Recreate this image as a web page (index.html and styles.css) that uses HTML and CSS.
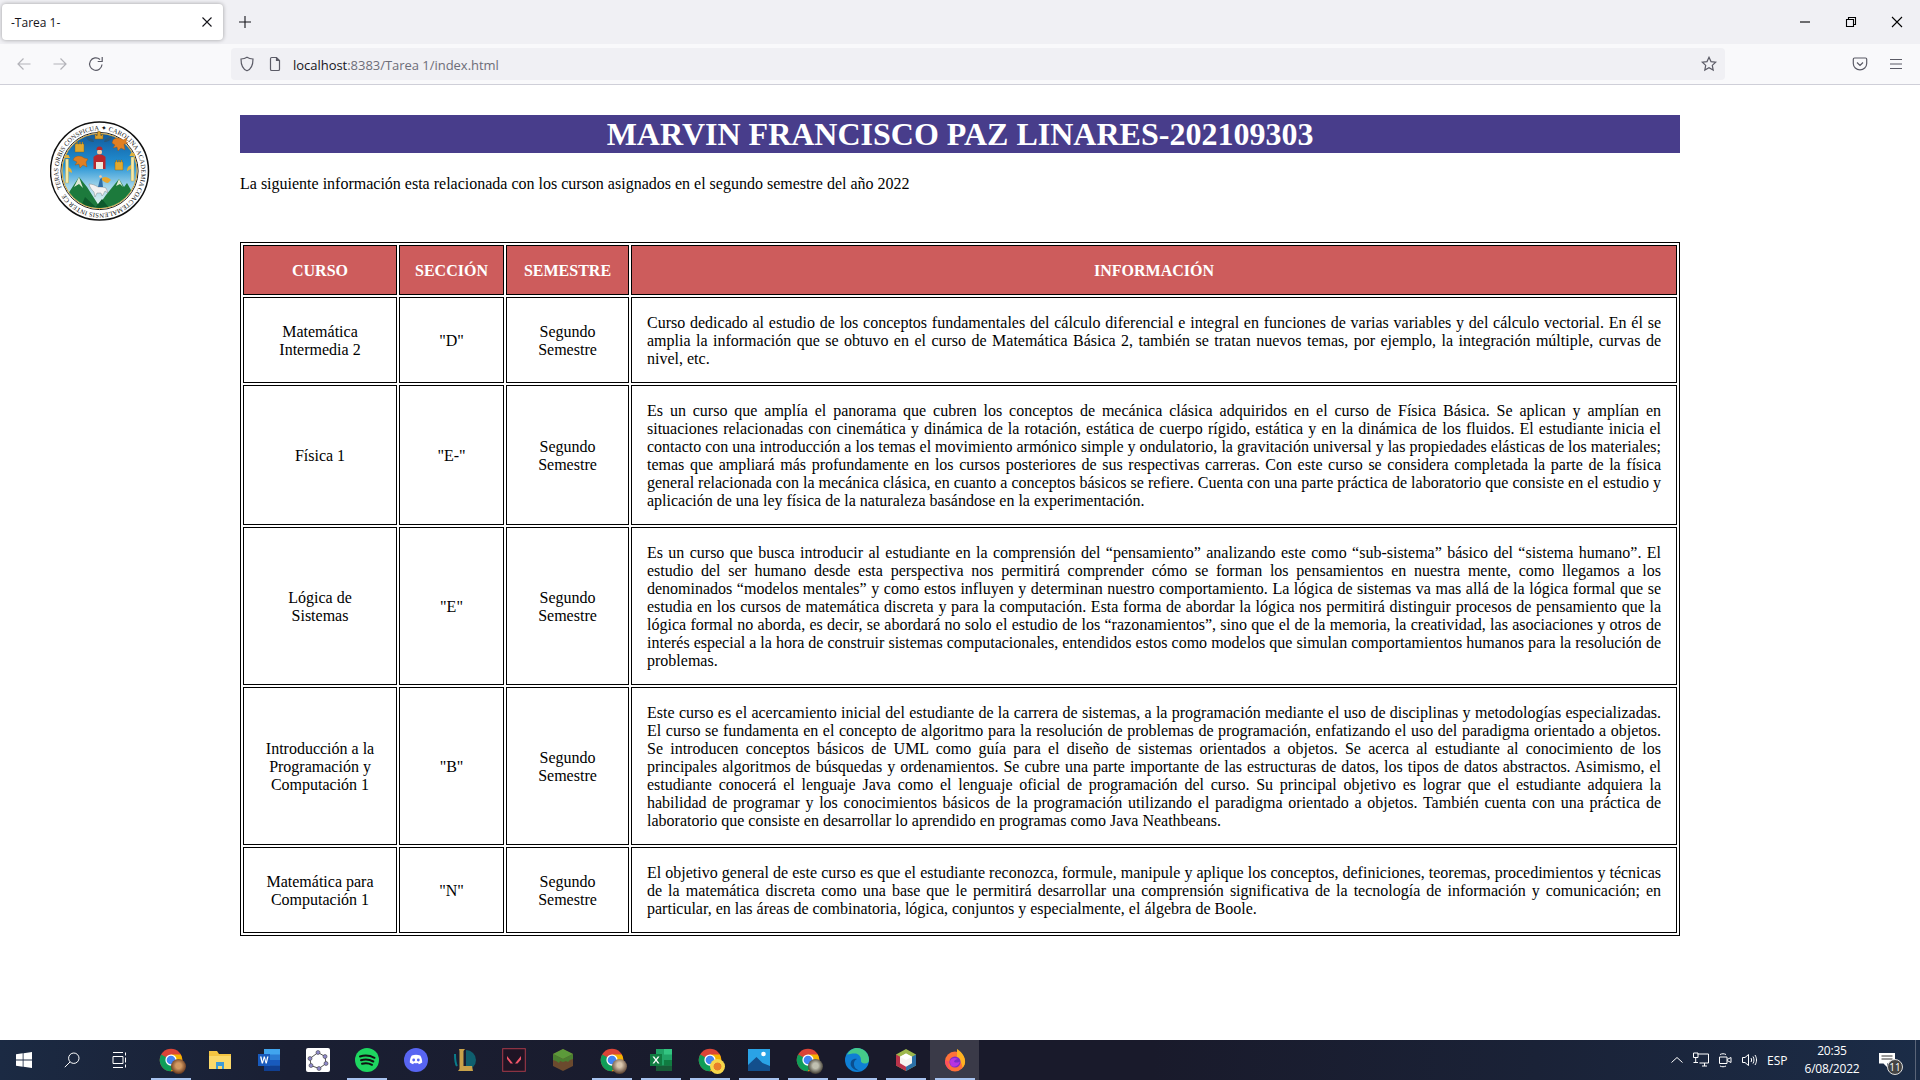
FILE: index.html
```html
<!DOCTYPE html>
<html lang="es">
<head>
<meta charset="utf-8">
<title>-Tarea 1-</title>
<link rel="stylesheet" href="styles.css">
</head>
<body>
<svg class="defs" aria-hidden="true">
  <defs>
    <symbol id="chrome" viewBox="0 0 32 32">
      <circle cx="16" cy="16" r="15" fill="#db4437"/>
      <path d="M16 16 3 8.500A15 15 0 0 0 16 31l7.500-13z" fill="#0f9d58"/>
      <path d="M16 16l7.500 2L16 31A15 15 0 0 0 29 8.500H16z" fill="#f4b400"/>
      <circle cx="16" cy="16" r="7.500" fill="#fff"/>
      <circle cx="16" cy="16" r="5.800" fill="#4285f4"/>
    </symbol>
  </defs>
</svg>
<div class="screen">
  <header class="browser">
    <div class="tabbar">
      <div class="tab">
        <span class="tab-title">-Tarea 1-</span>
        <svg class="ico12" viewBox="0 0 12 12"><path d="M1.500 1.500l9 9M10.500 1.500l-9 9" class="st-dark"/></svg>
      </div>
      <svg class="newtab" viewBox="0 0 14 14"><path d="M7 1v12M1 7h12" class="st-dark"/></svg>
      <div class="winctl">
        <span class="winbtn"><svg class="ico12" viewBox="0 0 12 12"><path d="M1 6h10" class="st-black"/></svg></span>
        <span class="winbtn"><svg class="ico12" viewBox="0 0 12 12"><path d="M1.500 3.500h7v7h-7zM3.500 3.500v-2h7v7h-2" class="st-black"/></svg></span>
        <span class="winbtn"><svg class="ico12" viewBox="0 0 12 12"><path d="M1 1l10 10M11 1L1 11" class="st-black"/></svg></span>
      </div>
    </div>
    <div class="toolbar">
      <nav class="navbtns">
        <svg class="ico16" viewBox="0 0 16 16"><path d="M14.500 8H2M7.500 2.500 2 8l5.500 5.500" class="st-faint"/></svg>
        <svg class="ico16" viewBox="0 0 16 16"><path d="M1.500 8H14M8.500 2.500 14 8l-5.500 5.500" class="st-faint"/></svg>
        <svg class="ico16" viewBox="0 0 16 16"><path d="M14 8.500A6.200 6.200 0 1 1 12 3.500M14.200 1v4.500H9.700" class="st-gray"/></svg>
      </nav>
      <div class="urlbar">
        <svg class="ico16" viewBox="0 0 16 16"><path d="M8 1.200c1.800 1.200 3.600 1.700 6 1.800 0 6.500-2 10.300-6 11.800C4 13.300 2 9.500 2 3c2.400-.1 4.200-.6 6-1.800z" class="st-gray"/></svg>
        <svg class="ico16 pageico" viewBox="0 0 16 16"><path d="M3.500 2.800c0-.7.500-1.300 1.200-1.300h4.800l3 3v8.700c0 .7-.5 1.300-1.200 1.300H4.700c-.7 0-1.200-.6-1.200-1.300zM9.500 1.500v3h3" class="st-gray"/></svg>
        <span class="url"><span class="url-host">localhost</span>:8383/Tarea 1/index.html</span>
        <svg class="ico16 star" viewBox="0 0 16 16"><path d="M8 1.300l2 4.300 4.700.6-3.400 3.200.9 4.700L8 11.800l-4.200 2.300.9-4.700L1.300 6.200 6 5.600z" class="st-gray"/></svg>
      </div>
      <div class="toolicons">
        <svg class="ico16" viewBox="0 0 16 16"><path d="M2.500 2h11c.7 0 1.200.5 1.200 1.200v4.300c0 3.600-3 6.300-6.700 6.300S1.300 11.100 1.300 7.500V3.200C1.300 2.500 1.800 2 2.500 2zM5 6.500l3 3 3-3" class="st-gray"/></svg>
        <svg class="ico16" viewBox="0 0 16 16"><path d="M2 3.500h12M2 8h12M2 12.500h12" class="st-gray"/></svg>
      </div>
    </div>
  </header>

  <main class="page">
    <aside class="brand">
      <svg class="seal" viewBox="0 0 100 100" role="img" aria-label="Escudo USAC">
        <defs>
          <linearGradient id="sky" x1="0" y1="0" x2="0" y2="1">
            <stop offset="0" stop-color="#125a9c"/>
            <stop offset=".42" stop-color="#2291d4"/>
            <stop offset=".7" stop-color="#9fd4ea"/>
            <stop offset="1" stop-color="#eef7ee"/>
          </linearGradient>
          <clipPath id="disc"><circle cx="49.500" cy="50" r="37"/></clipPath>
          <path id="ring" d="M11.900 67.500A41.500 41.500 0 1 1 12.500 68.800"/>
        </defs>
        <circle cx="49.500" cy="50" r="49" fill="#fff" stroke="#111" stroke-width="1.500"/>
        <text class="seal-text"><textPath href="#ring" textLength="254">TERAS ORBIS CONSPICUA ✦ CAROLINA ACADEMIA COACTEMALENSIS INTER CE</textPath></text>
        <circle cx="49.500" cy="50" r="38.600" fill="none" stroke="#222" stroke-width="1"/>
        <circle cx="49.500" cy="50" r="37.500" fill="url(#sky)" stroke="#d9a83a" stroke-width="1"/>
        <g clip-path="url(#disc)">
          <path d="M8 88 29 56l8 10 14 22zM46 88l10-14 13-16 5 8 3-4 16 28z" fill="#1c7a3c"/>
          <path d="M29 56l-5 10 5-3 4 4zM69 58l-3 7 4-2 3 3z" fill="#dfe9d6"/>
          <path d="M30 88l5-12 13 12zM44 88l8-10 8 10z" fill="#0d5a2c"/>
        </g>
        <path d="M43 18c-3 0-5-3-7-2 1 3 4 5 8 5zM55 18c3 0 5-3 7-2-1 3-4 5-8 5z" fill="#2a5a7c"/>
        <path d="M45 18v-5l2 2 1-5 1 1 1-1 1 5 2-2v5z" fill="#d9a02e" stroke="#8a5e12" stroke-width=".5"/>
        <path d="M25 31v-8h1.500v-2h1v2h2v-2h1v2h1.500v-2h1v2H34v8z" fill="#e0a92f" stroke="#7d5a16" stroke-width=".4"/>
        <path d="M63 19c3-3 8-2 10 0l4-2-1 4 2 1-4 1 1 6-4-2-3 3-1-4-4 1 2-3-3-2z" fill="#e07f22" stroke="#9a5010" stroke-width=".4"/>
        <path d="M24 37c3-3 8-2 10 0l4 1-2 3 1 5-4-2-3 3-1-4-4 1 2-3-4-2z" fill="#e07f22" stroke="#9a5010" stroke-width=".4"/>
        <path d="M65 49v-8h1v-2h1v2h1.500v-2h1v2H71v-2h1v2h1v8z" fill="#e0a92f" stroke="#7d5a16" stroke-width=".4"/>
        <circle cx="49.500" cy="31" r="2.500" fill="#f3c9a3"/>
        <path d="M49.500 25.500c-2.200 0-3.200 1.800-3 3.500h6c.2-1.700-.8-3.500-3-3.500z" fill="#b6252a"/>
        <path d="M43.500 48V36c2-2 4-2.500 6-2.500s4 .5 6 2.500v12z" fill="#b8262d"/>
        <path d="M46 48v-7h7v7z" fill="#f0e9dc"/>
        <path d="M15.500 38h3v24h-3zM81 36h3v24h-3z" fill="#f4e9a8" stroke="#b49a3a" stroke-width=".4"/>
        <path d="M14 37h6l-1.500-3h-3zM79.500 35h6L84 32h-3zM18 46c3 1 4 3 4 6l-4-2zM81 44c-3 1-4 3-4 6l4-2z" fill="#e1b23d"/>
        <path d="M39 63c3 0 6 1 9 3 3 0 6 0 8 1l2 5-3-2c-1 2-2 4-3 5l-1-3-4 0-2 4-1-5c-2-2-4-4-5-8z" fill="#f2f2f2" stroke="#777" stroke-width=".4"/>
        <path d="M48 66l2-8 2-1 1 9z" fill="#2d6ea8"/>
        <path d="M52 57c3-2 6-1 9 2l-3 3c-2 0-4-1-6-3z" fill="#e8a72e"/>
        <circle cx="50.500" cy="55.500" r="1.300" fill="#f3c9a3"/>
      </svg>
    </aside>
    <section class="content">
      <h1 class="title">MARVIN FRANCISCO PAZ LINARES-202109303</h1>
      <p class="intro">La siguiente información esta relacionada con los curson asignados en el segundo semestre del año 2022</p>
      <table class="courses">
        <colgroup>
          <col class="col-a"><col class="col-b"><col class="col-c"><col>
        </colgroup>
        <thead>
          <tr><th>CURSO</th><th>SECCIÓN</th><th>SEMESTRE</th><th>INFORMACIÓN</th></tr>
        </thead>
        <tbody>
          <tr>
            <td>Matemática Intermedia 2</td><td>"D"</td><td>Segundo Semestre</td>
            <td class="info">Curso dedicado al estudio de los conceptos fundamentales del cálculo diferencial e integral en funciones de varias variables y del cálculo vectorial. En él se amplia la información que se obtuvo en el curso de Matemática Básica 2, también se tratan nuevos temas, por ejemplo, la integración múltiple, curvas de nivel, etc.</td>
          </tr>
          <tr>
            <td>Física 1</td><td>"E-"</td><td>Segundo Semestre</td>
            <td class="info">Es un curso que amplía el panorama que cubren los conceptos de mecánica clásica adquiridos en el curso de Física Básica. Se aplican y amplían en situaciones relacionadas con cinemática y dinámica de la rotación, estática de cuerpo rígido, estática y en la dinámica de los fluidos. El estudiante inicia el contacto con una introducción a los temas el movimiento armónico simple y ondulatorio, la gravitación universal y las propiedades elásticas de los materiales; temas que ampliará más profundamente en los cursos posteriores de sus respectivas carreras. Con este curso se considera completada la parte de la física general relacionada con la mecánica clásica, en cuanto a conceptos básicos se refiere. Cuenta con una parte práctica de laboratorio que consiste en el estudio y aplicación de una ley física de la naturaleza basándose en la experimentación.</td>
          </tr>
          <tr>
            <td>Lógica de Sistemas</td><td>"E"</td><td>Segundo Semestre</td>
            <td class="info">Es un curso que busca introducir al estudiante en la comprensión del “pensamiento” analizando este como “sub-sistema” básico del “sistema humano”. El estudio del ser humano desde esta perspectiva nos permitirá comprender cómo se forman los pensamientos en nuestra mente, como llegamos a los denominados “modelos mentales” y como estos influyen y determinan nuestro comportamiento. La lógica de sistemas va mas allá de la lógica formal que se estudia en los cursos de matemática discreta y para la computación. Esta forma de abordar la lógica nos permitirá distinguir procesos de pensamiento que la lógica formal no aborda, es decir, se abordará no solo el estudio de los “razonamientos”, sino que el de la memoria, la creatividad, las asociaciones y otros de interés especial a la hora de construir sistemas computacionales, entendidos estos como modelos que simulan comportamientos humanos para la resolución de problemas.</td>
          </tr>
          <tr>
            <td>Introducción a la Programación y Computación 1</td><td>"B"</td><td>Segundo Semestre</td>
            <td class="info">Este curso es el acercamiento inicial del estudiante de la carrera de sistemas, a la programación mediante el uso de disciplinas y metodologías especializadas. El curso se fundamenta en el concepto de algoritmo para la resolución de problemas de programación, enfatizando el uso del paradigma orientado a objetos. Se introducen conceptos básicos de UML como guía para el diseño de sistemas orientados a objetos. Se acerca al estudiante al conocimiento de los principales algoritmos de búsquedas y ordenamientos. Se cubre una parte importante de las estructuras de datos, los tipos de datos abstractos. Asimismo, el estudiante conocerá el lenguaje Java como el lenguaje oficial de programación del curso. Su principal objetivo es lograr que el estudiante adquiera la habilidad de programar y los conocimientos básicos de la programación utilizando el paradigma orientado a objetos. También cuenta con una práctica de laboratorio que consiste en desarrollar lo aprendido en programas como Java Neathbeans.</td>
          </tr>
          <tr>
            <td>Matemática para Computación 1</td><td>"N"</td><td>Segundo Semestre</td>
            <td class="info">El objetivo general de este curso es que el estudiante reconozca, formule, manipule y aplique los conceptos, definiciones, teoremas, procedimientos y técnicas de la matemática discreta como una base que le permitirá desarrollar una comprensión significativa de la tecnología de información y comunicación; en particular, en las áreas de combinatoria, lógica, conjuntos y especialmente, el álgebra de Boole.</td>
          </tr>
        </tbody>
      </table>
    </section>
  </main>

  <footer class="taskbar">
    <div class="sysbtns">
      <span class="sysbtn"><svg class="ico16" viewBox="0 0 16 16"><path d="M0 2.300 6.700 1.300v6.300H0zM7.500 1.200 16 0v7.600H7.500zM0 8.400h6.700v6.300L0 13.700zM7.500 8.400H16V16l-8.500-1.200z" fill="#fff"/></svg></span>
      <span class="sysbtn"><svg class="ico16" viewBox="0 0 16 16"><circle cx="9.800" cy="6.200" r="5.200" class="st-white"/><path d="M6 10 .8 15.200" class="st-white"/></svg></span>
      <span class="sysbtn"><svg class="ico16" viewBox="0 0 16 16"><path d="M1 .5h10M1 15.500h10M1 4.500h10v7H1zM13.500 .5v3M13.500 5.500v5M13.500 12.500v3" class="st-white"/></svg></span>
    </div>
    <div class="apps">
      <span class="app on"><svg class="appico" viewBox="0 0 32 32"><use href="#chrome"/></svg><span class="avatar av-brown"></span></span>
      <span class="app"><svg class="appico" viewBox="0 0 24 24"><path d="M1 3h8l2 3h12v15H1z" fill="#f4c542"/><path d="M1 8h22v13H1z" fill="#fbd96a"/><path d="M8 14h8v7h-2v-3h-4v3H8z" fill="#3e9bd6"/></svg></span>
      <span class="app"><svg class="appico" viewBox="0 0 24 24"><path d="M7 1h16v22H7z" fill="#2b7cd3"/><path d="M7 1h16v5.500H7z" fill="#41a5ee"/><path d="M7 12h16v5.500H7z" fill="#185abd"/><path d="M7 17.500h16V23H7z" fill="#103f91"/><path d="M1 6h12v12H1z" fill="#185abd"/><path d="M3 8.500h1.500l1 5 1.200-5h1.200l1.200 5 1-5h1.400l-1.700 7H8.600L7.300 10.500 6 15.500H4.700z" fill="#fff"/></svg></span>
      <span class="app"><svg class="appico" viewBox="0 0 24 24"><rect width="24" height="24" rx="2" fill="#fff"/><path d="M12 4.500l7 4 1 7-7 5-8-3-1-7z" fill="none" stroke="#555" stroke-width="1"/><g fill="#8d88c9" stroke="#444" stroke-width=".6"><circle cx="12" cy="4.500" r="2"/><circle cx="19" cy="8.500" r="2"/><circle cx="20" cy="15.500" r="2"/><circle cx="13" cy="20.500" r="2"/><circle cx="5" cy="17.500" r="2"/><circle cx="4" cy="10.500" r="2"/></g></svg></span>
      <span class="app on"><svg class="appico" viewBox="0 0 24 24"><circle cx="12" cy="12" r="12" fill="#1ed760"/><path d="M5 8.500c5-1.500 10-1 14.500 1.300M6 12.300c4.300-1.200 8.500-.8 12.300 1.200M7 15.800c3.500-.9 7-.6 10 1" fill="none" stroke="#111" stroke-width="2" stroke-linecap="round"/></svg></span>
      <span class="app"><svg class="appico" viewBox="0 0 24 24"><circle cx="12" cy="12" r="12" fill="#5865f2"/><path d="M7.800 7.500c2.700-.9 5.700-.9 8.400 0 1.300 2 2 4.300 2 7-1 .9-2.200 1.500-3.300 1.800l-.9-1.400c-1.300.4-2.700.4-4 0l-.9 1.400c-1.100-.3-2.300-.9-3.300-1.800 0-2.700.7-5 2-7z" fill="#fff"/><circle cx="9.700" cy="12" r="1.400" fill="#5865f2"/><circle cx="14.300" cy="12" r="1.400" fill="#5865f2"/></svg></span>
      <span class="app"><svg class="appico" viewBox="0 0 24 24"><path d="M13 2a10 10 0 0 1 0 20z" fill="#0f5f6e"/><path d="M2 6c0 4 0 9 2 12" stroke="#0a7d8a" stroke-width="2" fill="none"/><path d="M6 1h6l-1.500 2v15H19l1 5H5l1.500-2V3z" fill="#c8a24a"/></svg></span>
      <span class="app"><svg class="appico" viewBox="0 0 24 24"><rect x=".7" y=".7" width="22.600" height="22.600" fill="#1e1424" stroke="#a83a4a" stroke-width="1"/><path d="M5 8l6 7.500H8.500L5 11zM19 8v3.500l-3.500 4H13z" fill="#f4566a"/></svg></span>
      <span class="app"><svg class="appico" viewBox="0 0 24 24"><path d="M12 1l10 5v12l-10 5-10-5V6z" fill="#6b4a2e"/><path d="M12 1l10 5-10 5L2 6z" fill="#5c9a3a"/><path d="M2 6l10 5v3l-3-1-1 2-3-2-3-1zM22 6l-10 5v3l3-1 2 1 2-2 3-1z" fill="#4a7f30"/></svg></span>
      <span class="app on"><svg class="appico" viewBox="0 0 32 32"><use href="#chrome"/></svg><span class="avatar av-dog"></span></span>
      <span class="app on"><svg class="appico" viewBox="0 0 24 24"><path d="M7 1h16v22H7z" fill="#21a366"/><path d="M15 1h8v5.500h-8z" fill="#33c481"/><path d="M15 12h8v5.500h-8z" fill="#107c41"/><path d="M7 17.500h16V23H7z" fill="#185c37"/><path d="M1 6h12v12H1z" fill="#107c41"/><path d="M3.500 8.500H5.200L7 11l1.800-2.500h1.700L7.900 12l2.600 3.500H8.800L7 13l-1.800 2.500H3.500L6.100 12z" fill="#fff"/></svg></span>
      <span class="app on"><svg class="appico" viewBox="0 0 32 32"><use href="#chrome"/></svg><span class="avatar av-corgi"></span></span>
      <span class="app on"><svg class="appico" viewBox="0 0 24 24"><path d="M1 1h22v22H1z" fill="#2aa3e6"/><path d="M1 23v-6L9.500 9l6 6 7.500 3v5z" fill="#134f8c"/><circle cx="16.500" cy="6" r="2.300" fill="#fff"/></svg></span>
      <span class="app on"><svg class="appico" viewBox="0 0 32 32"><use href="#chrome"/></svg><span class="avatar av-gray"></span></span>
      <span class="app on"><svg class="appico" viewBox="0 0 24 24"><circle cx="12" cy="12" r="12" fill="#0f7fd4"/><path d="M2 7C4 2.500 8 0 12 0c7 0 12 5 12 12 0 2-1.500 3.500-4 3.500-3 0-4.500-1.500-4-3.500C16 8 13 5.500 10 5.500 6.500 5.500 3.500 6 2 7z" fill="#45c98a"/><path d="M9 11c-3 1-4 4-3 7 1.500 3 5 5 9 4.500-4-.5-6.500-4-6-7.500.2-1.500 1-3 3-4-1-.5-2-.5-3 0z" fill="#0b4f8f"/></svg></span>
      <span class="app on"><svg class="appico" viewBox="0 0 24 24"><path d="M12 1l10 5.500v11L12 23 2 17.500v-11z" fill="#9db84c"/><path d="M2 6.500 12 12v11L2 17.500z" fill="#b8324a"/><path d="M22 6.500 12 12v11l10-5.500z" fill="#2b70a8"/><path d="M12 5.500l6 3.300v6.500L12 18.800l-6-3.500V8.800z" fill="#f4f4f0"/><path d="M12 12 6 8.800l6-3.300 6 3.300z" fill="#fff"/></svg></span>
      <span class="app on active"><svg class="appico" viewBox="0 0 24 24"><circle cx="12" cy="13.500" r="10" fill="#ff7139"/><path d="M14 1c3 2 7 5 8 11 .5 3-.5 6-2.500 8-.3-5-3-8-5.500-9.500z" fill="#ffb321"/><path d="M2 12c-.3 5 2.500 9 7 10.500-3-2-4.500-5-3-9z" fill="#ff4f5e"/><circle cx="12" cy="14" r="5.600" fill="#7c2bc8"/><path d="M7 13c1-3 5-4 8-2-3 .5-4 1.500-3.800 3 2 1 4.500.5 5.600-.5-.5 3-3 5.200-5.800 5.200S7 16.500 7 13z" fill="#b833e1"/></svg></span>
    </div>
    <div class="tray">
      <svg class="ico16 trayico1" viewBox="0 0 16 16"><path d="M2.500 10.500 8 5.500l5.500 5" class="st-white"/></svg>
      <svg class="ico16" viewBox="0 0 16 16"><path d="M4.500 2H15.500v9h-9M9 14h5M11.500 11v3M.5 1h4.500v4.500H.5zM2.700 5.500v5h-1.200M.5 10.500h4.500" class="st-white"/></svg>
      <svg class="ico16" viewBox="0 0 16 16"><path d="M2.500 5h7.500v6.500H2.500zM10 7.500 14 5.500v5l-4-2M3 2.500c2-1 4-1 6 0M3 14c2 1 4 1 6 0" class="st-white"/></svg>
      <svg class="ico16" viewBox="0 0 16 16"><path d="M1.500 5.500h2.500L7.500 2.500v11L4 10.500H1.500zM10 6c.8 1.300.8 2.700 0 4M12 4.500c1.300 2.300 1.300 4.700 0 7M14 3c2 3.300 2 6.700 0 10" class="st-white"/></svg>
      <span class="lang">ESP</span>
      <span class="clock"><span>20:35</span><span>6/08/2022</span></span>
      <span class="notif">
        <svg class="ico16 notifico" viewBox="0 0 16 16"><path d="M0 1h16v10.500H8v3.500l-3.500-3.500H0z" fill="#fff"/><path d="M2.500 4h11M2.500 7h11" stroke="#333" stroke-width="1"/></svg>
        <span class="badge">11</span>
      </span>
      <span class="desktop"></span>
    </div>
  </footer>
</div>
</body>
</html>
```
FILE: styles.css
```css
* { box-sizing: border-box; }
html, body { margin: 0; padding: 0; height: 100%; }
body { background: #fff; overflow: hidden; font-family: "Liberation Serif", serif; color: #000; }
.defs { display: none; }
.screen { display: flex; flex-direction: column; height: 1080px; }

/* icon sizes and strokes */
.ico12 { width: 12px; height: 12px; flex: none; display: block; }
.ico16 { width: 16px; height: 16px; flex: none; display: block; }
.st-dark, .st-black, .st-faint, .st-gray, .st-white { fill: none; stroke-width: 1.1; }
.st-dark { stroke: #15141a; }
.st-black { stroke: #000; }
.st-faint { stroke: #b3b3b9; stroke-width: 1.2; }
.st-gray { stroke: #5b5b66; stroke-width: 1.2; }
.st-white { stroke: #fff; stroke-width: 1; }

/* browser chrome */
.browser { flex: none; font-family: "Open Sans", sans-serif; }
.tabbar { display: flex; align-items: center; height: 44px; padding: 4px 0 4px 2px; background: #f0f0f4; }
.tab { display: flex; align-items: center; justify-content: space-between; width: 221px; height: 36px; padding: 0 10px 0 9px; background: #fff; border-radius: 4px; box-shadow: 0 0 4px rgba(0,0,0,.35); }
.tab-title { font-size: 12px; color: #15141a; }
.newtab { width: 14px; height: 14px; margin-left: 15px; display: block; }
.winctl { display: flex; margin-left: auto; }
.winbtn { display: flex; align-items: center; justify-content: center; width: 46px; height: 36px; }
.toolbar { display: flex; align-items: center; height: 41px; padding-bottom: 1px; background: #f9f9fb; border-bottom: 1px solid #cfcfd8; }
.navbtns { display: flex; gap: 20px; width: 231px; padding-left: 16px; }
.urlbar { display: flex; align-items: center; width: 1494px; height: 32px; padding: 0 8px; background: #f0f0f4; border-radius: 4px; }
.pageico { margin-left: 12px; }
.url { margin-left: 10px; padding-top: 2px; font-size: 13px; letter-spacing: -.03px; color: #6d6d78; }
.url-host { color: #15141a; }
.star { margin-left: auto; }
.toolicons { display: flex; gap: 20px; margin-left: 127px; }

/* page */
.page { flex: 1; display: grid; grid-template-columns: 240px 1440px; align-content: start; padding-top: 30px; }
.brand { padding: 6px 0 0 50px; }
.seal { display: block; width: 100px; height: 100px; }
.seal-text { font-family: "Liberation Serif", serif; font-size: 6.500px; fill: #111; }
.title { margin: 0; height: 38px; line-height: 38px; background: #483d8b; color: #fff; font-size: 32px; font-weight: 700; text-align: center; }
.intro { margin: 22px 0 49px; font-size: 16px; line-height: 18px; }

.courses { width: 1440px; table-layout: fixed; border: 1px solid #000; border-spacing: 2px; border-collapse: separate; font-size: 16px; line-height: 18px; }
.col-a { width: 154px; }
.col-b { width: 105px; }
.col-c { width: 123px; }
.courses th, .courses td { padding: 16px 15px 14px; border: 1px solid #000; text-align: center; vertical-align: middle; }
.courses th { background: #cd5c5c; color: #fff; font-weight: 700; }
.courses td.info { text-align: justify; }

/* taskbar */
.taskbar { flex: none; display: flex; height: 40px; background: linear-gradient(90deg, #1b2a43 0%, #1a1f33 15%, #191a2b 40%, #191a2b 60%, #1a2237 80%, #1b2c47 100%); }
.sysbtns { display: flex; width: 146px; }
.sysbtn { display: flex; align-items: center; justify-content: center; width: 48px; }
.apps { display: flex; }
.app { position: relative; display: flex; align-items: center; justify-content: center; width: 49px; height: 40px; }
.appico { width: 24px; height: 24px; display: block; }
.app.on::after { content: ""; position: absolute; left: 4.500px; right: 4.500px; bottom: 0; height: 2px; background: #a8c3ef; }
.app.active { background: #3a3a48; }
.avatar { position: absolute; left: 25px; top: 19px; width: 15px; height: 15px; border-radius: 50%; }
.av-brown { background: radial-gradient(circle at 50% 45%, #d39a62 25%, #6d3d22 70%); }
.av-dog { background: radial-gradient(circle at 50% 40%, #d9c6ae 20%, #5a4030 75%); }
.av-corgi { background: radial-gradient(circle at 50% 50%, #e8802a 35%, #f7d64a 40%); }
.av-gray { background: radial-gradient(circle at 50% 45%, #bfbfb0 25%, #3a352c 75%); }

.tray { display: flex; align-items: center; margin-left: auto; width: 251px; color: #fff; font-family: "Open Sans", sans-serif; font-size: 12px; }
.tray .ico16 { margin-right: 8px; }
.lang { margin-left: 2px; width: 29px; }
.clock { display: flex; flex-direction: column; align-items: center; width: 72px; line-height: 18px; font-size: 12px; letter-spacing: -.2px; }
.notif { position: relative; width: 24px; height: 24px; margin-left: 7px; flex: none; }
.tray .notifico { width: 16px; height: 16px; margin: 4px 0 0 4px; }
.badge { position: absolute; left: 12px; top: 11px; width: 16px; height: 16px; border-radius: 50%; background: #444; border: 1px solid #ddd; font-size: 10px; line-height: 14px; text-align: center; }
.desktop { width: 1px; height: 40px; margin-left: 16px; background: #5a6478; flex: none; }
```
